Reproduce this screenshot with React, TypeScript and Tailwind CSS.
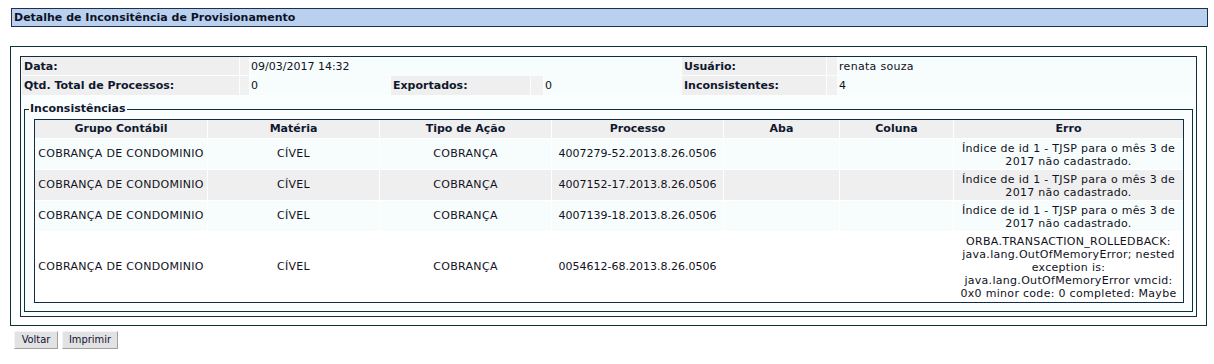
import React from 'react';

type Linha = {
  grupo: string;
  materia: string;
  tipo: string;
  processo: string;
  aba: string;
  coluna: string;
  erro: string;
  bg: string;
};

const linhas: Linha[] = [
  {
    grupo: 'COBRANÇA DE CONDOMINIO',
    materia: 'CÍVEL',
    tipo: 'COBRANÇA',
    processo: '4007279-52.2013.8.26.0506',
    aba: '',
    coluna: '',
    erro: 'Índice de id 1 - TJSP para o mês 3 de 2017 não cadastrado.',
    bg: 'bg-[#f7fdfd]',
  },
  {
    grupo: 'COBRANÇA DE CONDOMINIO',
    materia: 'CÍVEL',
    tipo: 'COBRANÇA',
    processo: '4007152-17.2013.8.26.0506',
    aba: '',
    coluna: '',
    erro: 'Índice de id 1 - TJSP para o mês 3 de 2017 não cadastrado.',
    bg: 'bg-[#efefef]',
  },
  {
    grupo: 'COBRANÇA DE CONDOMINIO',
    materia: 'CÍVEL',
    tipo: 'COBRANÇA',
    processo: '4007139-18.2013.8.26.0506',
    aba: '',
    coluna: '',
    erro: 'Índice de id 1 - TJSP para o mês 3 de 2017 não cadastrado.',
    bg: 'bg-[#f7fdfd]',
  },
  {
    grupo: 'COBRANÇA DE CONDOMINIO',
    materia: 'CÍVEL',
    tipo: 'COBRANÇA',
    processo: '0054612-68.2013.8.26.0506',
    aba: '',
    coluna: '',
    erro: 'ORBA.TRANSACTION_ROLLEDBACK: java.lang.OutOfMemoryError; nested exception is: java.lang.OutOfMemoryError vmcid: 0x0 minor code: 0 completed: Maybe',
    bg: 'bg-white',
  },
];

const colunas = ['Grupo Contábil', 'Matéria', 'Tipo de Ação', 'Processo', 'Aba', 'Coluna', 'Erro'];

function Rotulo({ children }: { children?: React.ReactNode }) {
  return <div className="bg-[#efefef] pl-[2px] pt-px font-bold leading-[17px] text-[#10182e]">{children}</div>;
}

function Valor({ children, span }: { children?: React.ReactNode; span?: boolean }) {
  return (
    <div className={`bg-[#f7fdfd] pl-px pt-px leading-[17px] ${span ? 'col-span-4' : ''}`}>{children}</div>
  );
}

const Sep = () => <div className="bg-[#f1f1f1]" />;

export default function App() {
  return (
    <div className="w-[1214px] h-[364px] bg-white pt-[8px] font-['DejaVu_Sans',sans-serif] text-[11px] text-[#111122]">
      {/* titulo */}
      <div className="ml-[11px] w-[1197px] h-[19px] border border-[#1c2f52] bg-[#b9d1ee] pl-[2px] pt-px font-bold leading-[16px] text-[#0d1226]">
        Detalhe de Inconsitência de Provisionamento
      </div>

      {/* caixa externa */}
      <div className="ml-[10px] mt-[19px] w-[1197px] border border-[#0d3238] bg-white pt-[9px] pb-[8px] px-[9px]">
        <div className="border border-[#132c44] bg-[#fbfefe] pb-[4px]">
          {/* dados */}
          <div className="ml-px grid grid-cols-[217px_9px_140px_139px_12px_137px_144px_10px_1fr] grid-rows-[18px_19px] gap-px">
            <Rotulo>Data:</Rotulo>
            <Sep />
            <Valor span>09/03/2017 14:32</Valor>
            <Rotulo>Usuário:</Rotulo>
            <Sep />
            <Valor>
              <span className="tracking-[0.3px]">renata souza</span>
            </Valor>

            <Rotulo>Qtd. Total de Processos:</Rotulo>
            <Sep />
            <Valor>0</Valor>
            <Rotulo>Exportados:</Rotulo>
            <Sep />
            <Valor>0</Valor>
            <Rotulo>Inconsistentes:</Rotulo>
            <Sep />
            <Valor>4</Valor>
          </div>

          {/* inconsistencias */}
          <fieldset className="ml-[3px] mr-[4px] mt-[7px] border border-[#0d3238] pl-[9px] pr-[8px] pt-[3px] pb-[8px]">
            <legend className="ml-[-5px] px-px font-bold leading-[14px] text-[#10182e]">Inconsistências</legend>
            <div className="grid grid-cols-[172px_171px_171px_171px_115px_113px_229px] grid-rows-[18px_30px_30px_30px_70px] gap-px border border-[#132c44] bg-white">
              {colunas.map((c) => (
                <div key={c} className="flex items-center justify-center bg-[#efefef] pt-px font-bold text-[#10182e]">
                  {c}
                </div>
              ))}
              {linhas.map((l, i) => (
                <React.Fragment key={i}>
                  <div className={`${l.bg} flex items-center justify-center pt-px tracking-[0.3px]`}>{l.grupo}</div>
                  <div className={`${l.bg} flex items-center justify-center pt-px tracking-[0.3px]`}>{l.materia}</div>
                  <div className={`${l.bg} flex items-center justify-center pt-px tracking-[0.3px]`}>{l.tipo}</div>
                  <div className={`${l.bg} flex items-center justify-center pt-px`}>{l.processo}</div>
                  <div className={`${l.bg} flex items-center justify-center`}>{l.aba}</div>
                  <div className={`${l.bg} flex items-center justify-center`}>{l.coluna}</div>
                  <div className={`${l.bg} flex items-center justify-center px-[4px] pt-px text-center leading-[13px] tracking-[0.3px]`}>
                    {l.erro}
                  </div>
                </React.Fragment>
              ))}
            </div>
          </fieldset>
        </div>
      </div>

      {/* botoes */}
      <div className="ml-[14px] mt-[5px] flex gap-[4px] font-['DejaVu_Sans_Condensed',sans-serif] text-[11px]">
        <button className="h-[18px] w-[44px] border border-t-[#f4f4f4] border-l-[#f4f4f4] border-r-[#a0a0a0] border-b-[#a0a0a0] bg-[#e2e2e2] leading-[16px] text-[#111133]">
          Voltar
        </button>
        <button className="h-[18px] w-[56px] border border-t-[#f4f4f4] border-l-[#f4f4f4] border-r-[#a0a0a0] border-b-[#a0a0a0] bg-[#e2e2e2] leading-[16px] text-[#111133]">
          Imprimir
        </button>
      </div>
    </div>
  );
}
